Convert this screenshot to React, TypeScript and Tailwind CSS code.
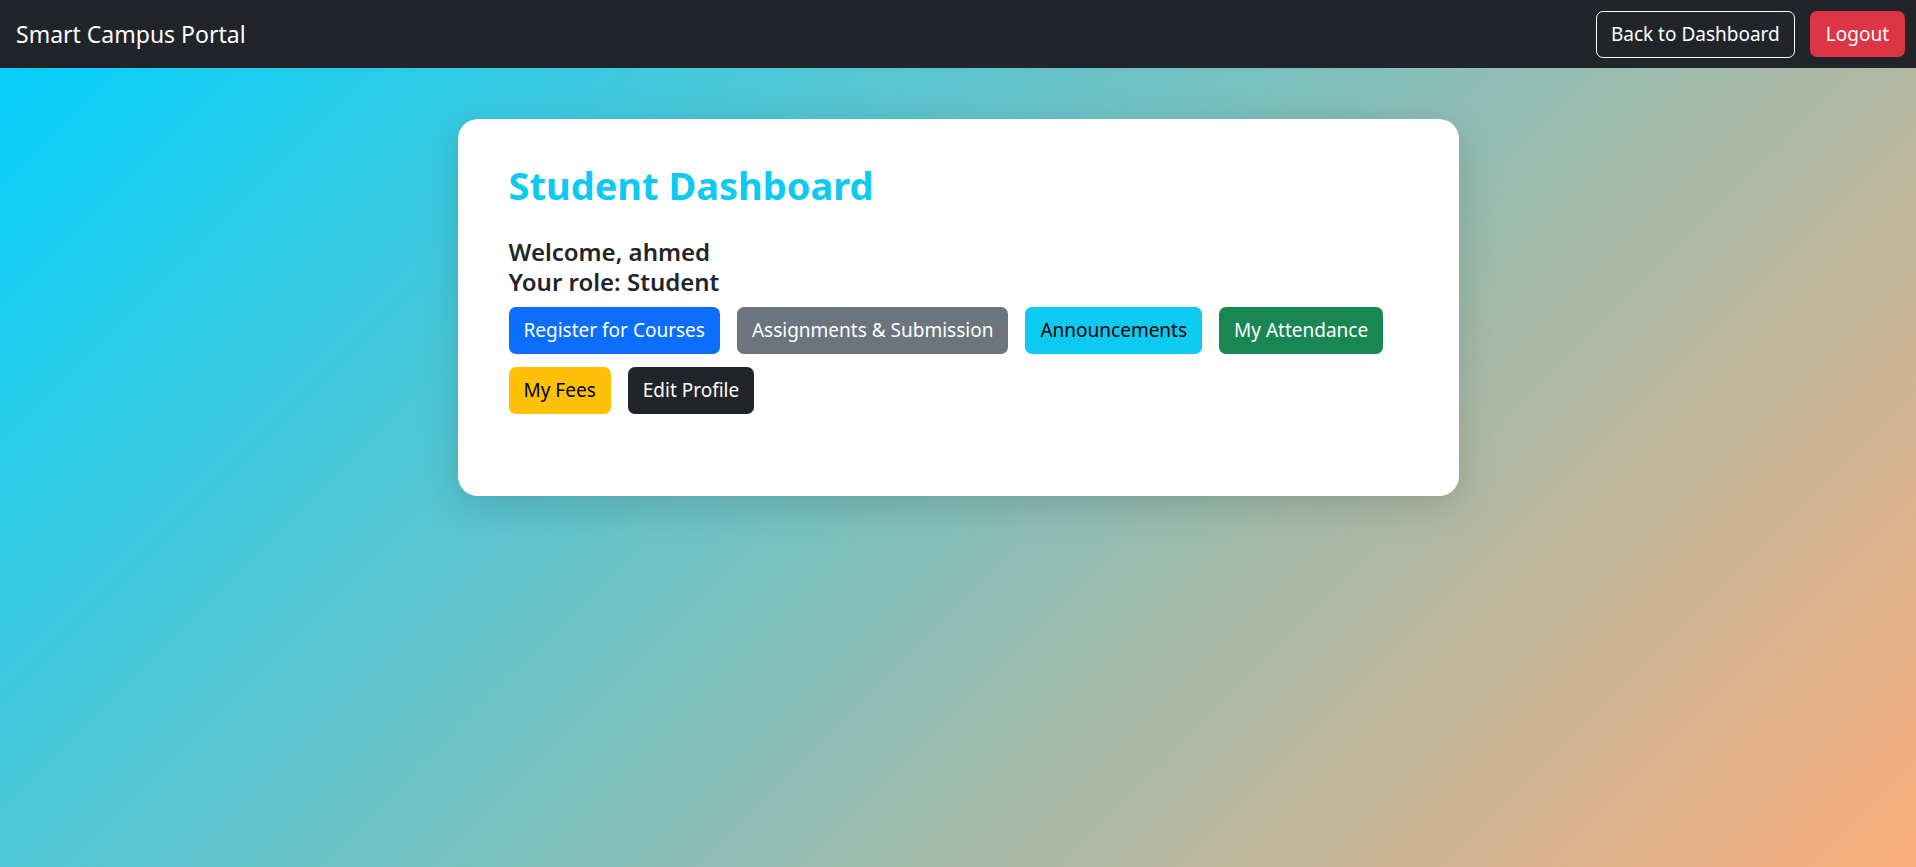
const buttons = [
  { label: "Register for Courses", cls: "bg-[#0d6efd] text-white" },
  { label: "Assignments & Submission", cls: "bg-[#6c757d] text-white" },
  { label: "Announcements", cls: "bg-[#0dcaf0] text-black" },
  { label: "My Attendance", cls: "bg-[#198754] text-white" },
  { label: "My Fees", cls: "bg-[#ffc107] text-black" },
  { label: "Edit Profile", cls: "bg-[#212529] text-white" },
];

export default function App() {
  return (
    <div className="min-h-screen bg-[linear-gradient(135deg,#00d2ff,#fcae7c)] font-['Noto_Sans',sans-serif] text-[#212529]">
      <nav className="flex h-[68px] items-center justify-between bg-[#212529] pl-4 pr-[11px]">
        <span className="text-[23px] text-white">Smart Campus Portal</span>
        <div className="flex items-center gap-[15px]">
          <button className="h-[47px] rounded-[7px] border border-white px-[14px] text-[19px] text-white">
            Back to Dashboard
          </button>
          <button className="h-[46px] rounded-[7px] bg-[#dc3545] px-4 text-[19px] text-white">
            Logout
          </button>
        </div>
      </nav>

      <main className="flex justify-center pt-[51px]">
        <div className="h-[377px] w-[1001px] rounded-[20px] bg-white pl-[51px] pr-[48px] pt-[42px] shadow-[0_10px_40px_rgba(0,0,0,0.15)]">
          <h2 className="text-[38px] font-bold leading-[48px] text-[#0dcaf0]">Student Dashboard</h2>
          <div className="mt-[28px] text-[24px] font-semibold leading-[30px]">
            <p>Welcome, ahmed</p>
            <p>Your role: Student</p>
          </div>
          <div className="mt-[10px] flex w-[900px] flex-wrap gap-x-[17px] gap-y-[13px]">
            {buttons.map((b) => (
              <button key={b.label} className={`h-[47px] rounded-[7px] px-[15px] text-[19px] ${b.cls}`}>
                {b.label}
              </button>
            ))}
          </div>
        </div>
      </main>
    </div>
  );
}
